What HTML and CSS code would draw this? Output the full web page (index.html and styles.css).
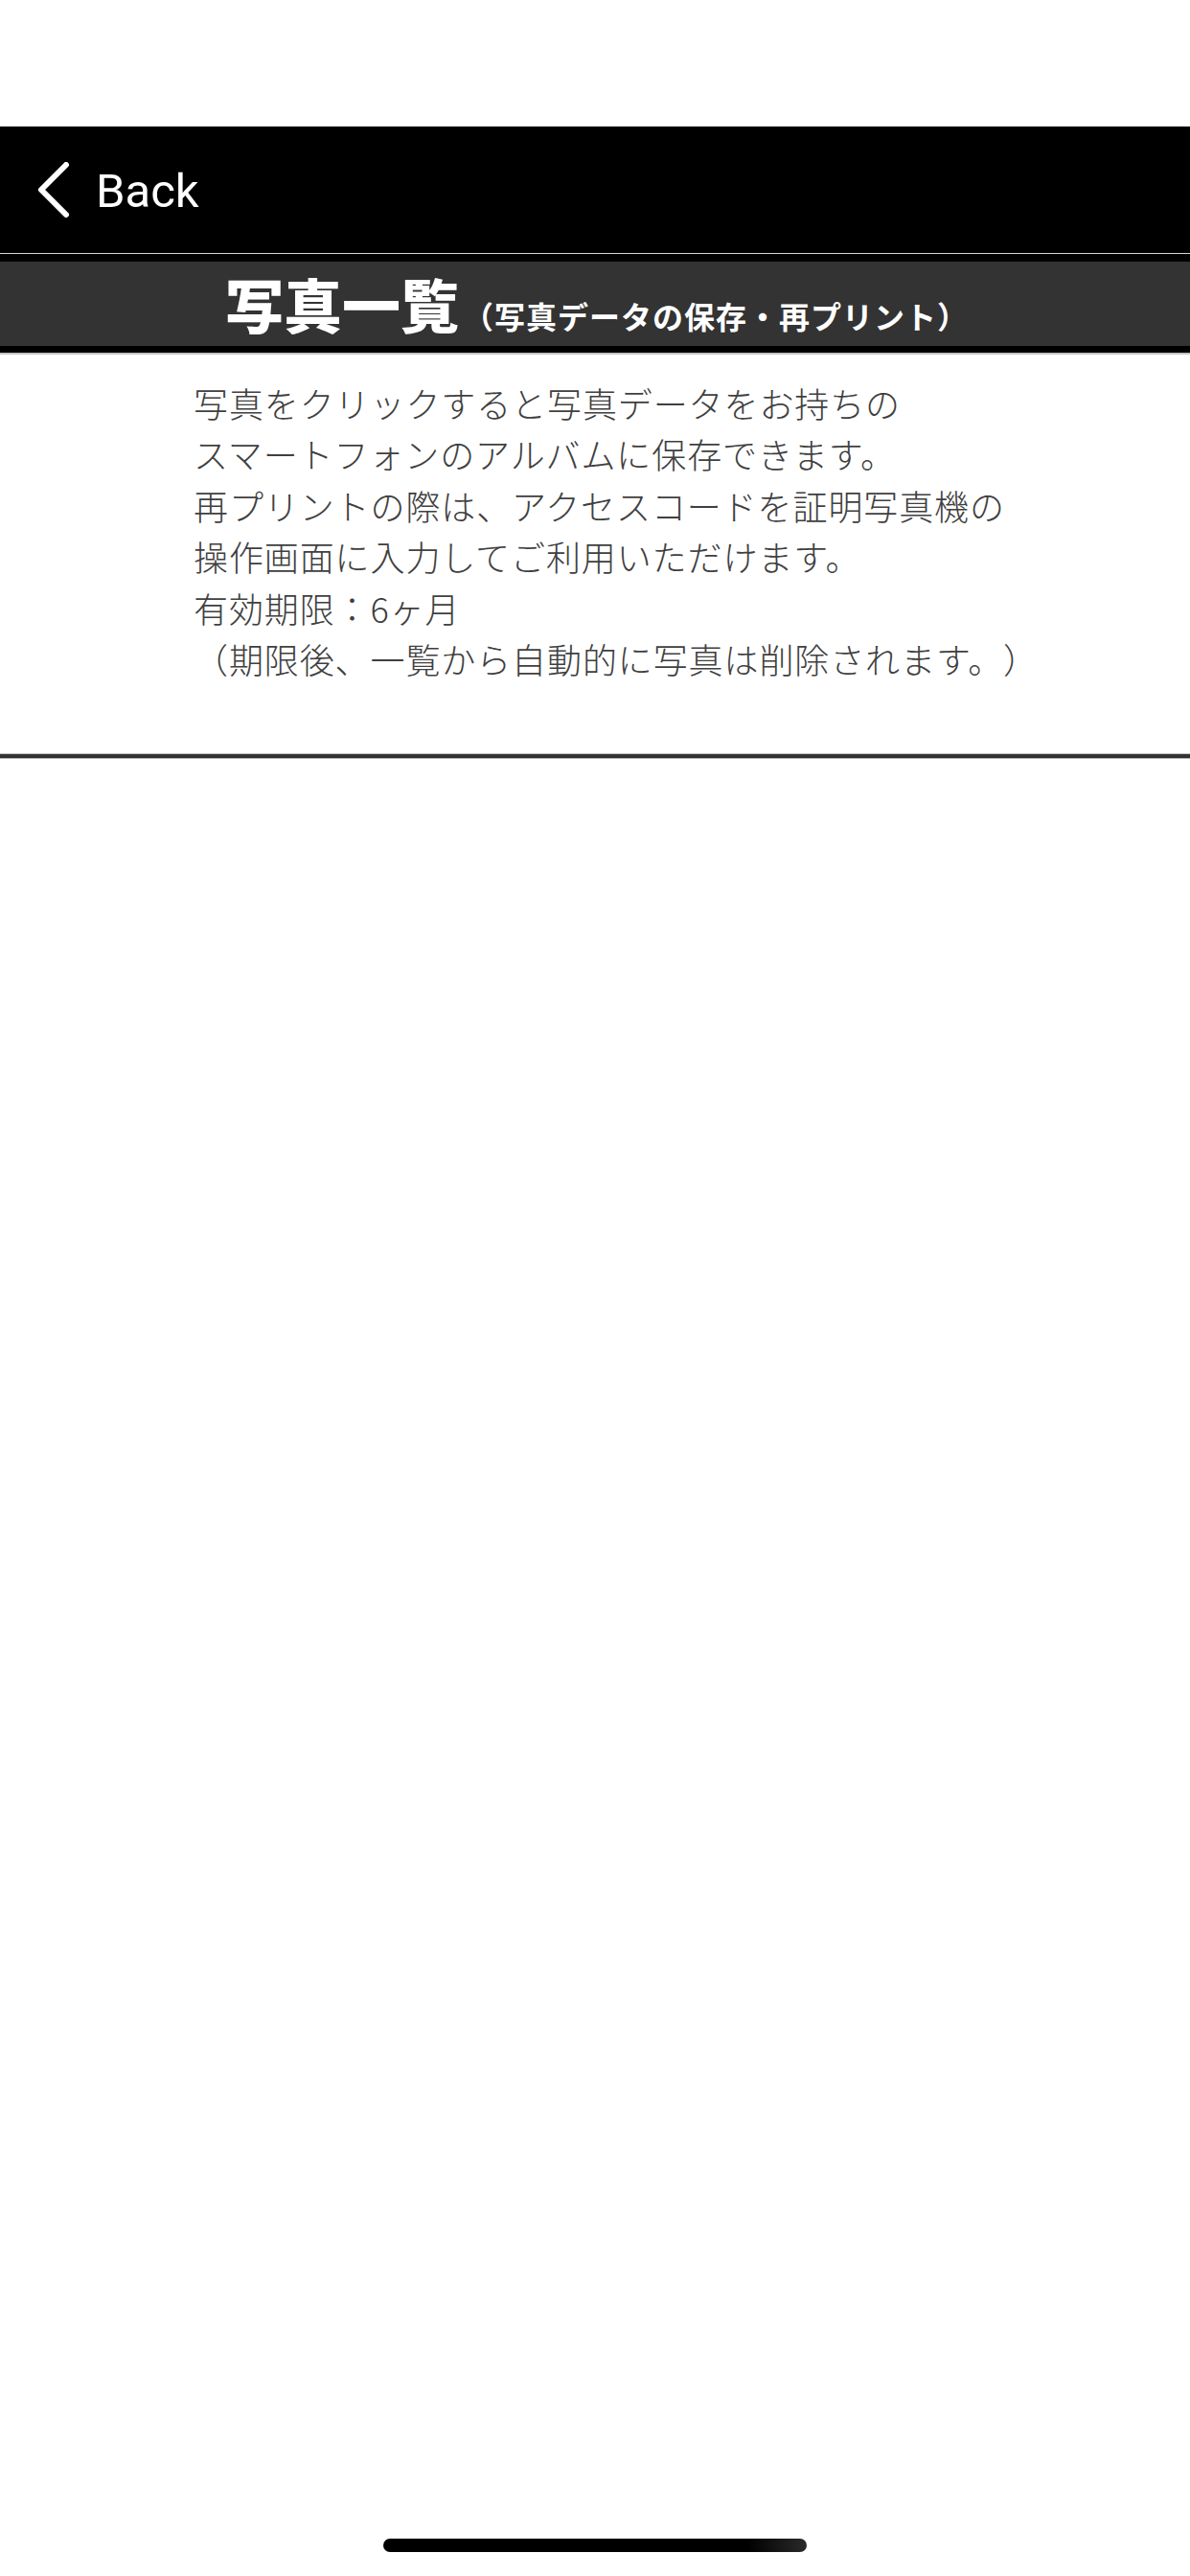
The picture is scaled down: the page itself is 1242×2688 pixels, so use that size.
FILE: index.html
```html
<!DOCTYPE html>
<html lang="ja">
<head>
<meta charset="utf-8">
<title>写真一覧</title>
<link rel="stylesheet" href="styles.css">
</head>
<body>
<div class="status-area"></div>
<header class="navbar">
  <a class="back" href="#">
    <svg class="chevron" width="36" height="58" viewBox="0 0 36 58" aria-hidden="true">
      <path d="M31 3 L5 29 L31 55" fill="none" stroke="#fff" stroke-width="6" stroke-linecap="round" stroke-linejoin="round"/>
    </svg>
    <span class="back-label">Back</span>
  </a>
</header>
<div class="rule-light"></div>
<div class="title-frame">
  <div class="title-band">
    <h1 class="title">写真一覧</h1>
    <span class="subtitle">（写真データの保存・再プリント）</span>
  </div>
</div>
<div class="rule-under"></div>
<main class="content">
  <p class="info">写真をクリックすると写真データをお持ちの<br>スマートフォンのアルバムに保存できます。<br>再プリントの際は、アクセスコードを証明写真機の<br>操作画面に入力してご利用いただけます。<br>有効期限：6ヶ月<br>（期限後、一覧から自動的に写真は削除されます。）</p>
</main>
<div class="rule-dark"></div>
<div class="home-indicator"></div>
</body>
</html>
```
FILE: styles.css
```css
html, body {
  margin: 0;
  padding: 0;
  background: #ffffff;
}
body {
  width: 1242px;
  min-height: 2688px;
  font-family: "Noto Sans CJK JP", "Noto Sans", sans-serif;
  position: relative;
  text-spacing-trim: space-all;
}
.status-area {
  height: 132px;
  background: #ffffff;
}
.navbar {
  height: 132px;
  background: #000000;
  display: flex;
  align-items: center;
  padding-left: 38px;
  box-sizing: border-box;
}
.back {
  display: flex;
  align-items: center;
  gap: 26px;
  text-decoration: none;
  color: #ffffff;
}
.chevron {
  display: block;
}
.back-label {
  font-family: Roboto, "Liberation Sans", sans-serif;
  font-size: 49px;
  font-weight: 400;
  color: #ffffff;
  line-height: 1;
  position: relative;
  top: 1px;
}
.rule-light {
  height: 1px;
  background: #d8d8d8;
}
.title-frame {
  background: #000000;
  padding: 8px 0 7px;
}
.title-band {
  height: 88px;
  background: #333333;
  display: flex;
  justify-content: center;
  align-items: baseline;
  padding-left: 4px;
  box-sizing: border-box;
}
.title {
  margin: 0;
  font-size: 61px;
  font-weight: 900;
  color: #ffffff;
  line-height: 88px;
  letter-spacing: 0;
}
.subtitle {
  font-size: 32px;
  font-weight: 700;
  color: #ffffff;
  margin-left: 4px;
  letter-spacing: 1px;
}
.rule-under {
  height: 2px;
  background: #c4c4c4;
}
.content {
  padding: 24px 0 72px 202px;
}
.info {
  margin: 0;
  font-size: 36px;
  line-height: 53.4px;
  font-weight: 300;
  letter-spacing: 0.9px;
  color: #404040;
}
.rule-dark {
  height: 4px;
  background: #333333;
  border-top: 1px solid #bdbdbd;
  border-bottom: 1px solid #bdbdbd;
}
.home-indicator {
  position: absolute;
  left: 400px;
  top: 2649px;
  width: 442px;
  height: 14px;
  border-radius: 7px;
  background: linear-gradient(to right, #000000 0%, #000000 86%, #2a2a2a 100%);
}
```
